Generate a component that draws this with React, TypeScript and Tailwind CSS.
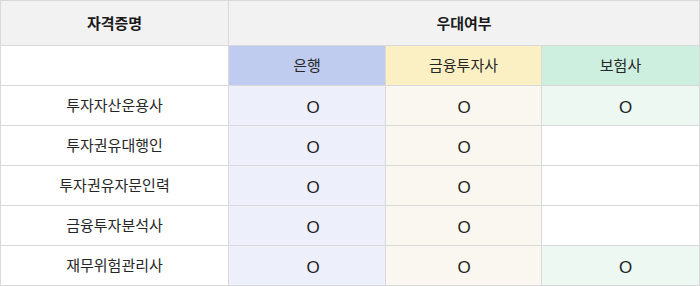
import React from "react";

const rows: { name: string; v: [boolean, boolean, boolean] }[] = [
  { name: "투자자산운용사", v: [true, true, true] },
  { name: "투자권유대행인", v: [true, true, false] },
  { name: "투자권유자문인력", v: [true, true, false] },
  { name: "금융투자분석사", v: [true, true, false] },
  { name: "재무위험관리사", v: [true, true, true] },
];

const cell = "flex items-center justify-center";

function Mark() {
  return (
    <span
      className="text-[17px] leading-none text-[#222] pt-[3px]"
      style={{ fontFamily: '"Liberation Sans", Arial, sans-serif' }}
    >
      O
    </span>
  );
}

export default function App() {
  return (
    <div
      className="w-[700px] h-[286px] bg-white text-[#262626] text-[15px]"
      style={{ fontFamily: '"Noto Sans CJK KR", "Noto Sans", sans-serif' }}
    >
      <div className="grid grid-cols-[227px_156px_155px_157px] grid-rows-[44px_39px_39px_39px_39px_39px_39px] gap-px p-px bg-[#d9d9d9]">
        <div className={`${cell} bg-[#f2f2f2] font-bold text-[#1a1a1a]`}>자격증명</div>
        <div className={`${cell} col-span-3 bg-[#f2f2f2] font-bold text-[#1a1a1a]`}>우대여부</div>
        <div className="bg-white" />
        <div className={`${cell} bg-[#bfcbef]`}>은행</div>
        <div className={`${cell} bg-[#fbf0c4]`}>금융투자사</div>
        <div className={`${cell} bg-[#cdefdf]`}>보험사</div>
        {rows.map((r) => (
          <React.Fragment key={r.name}>
            <div className={`${cell} bg-white`}>{r.name}</div>
            <div className={`${cell} pl-[12px] ${r.v[0] ? "bg-[#edf0fa]" : "bg-white"}`}>{r.v[0] ? <Mark /> : null}</div>
            <div className={`${cell} pl-[1px] ${r.v[1] ? "bg-[#f9f7ef]" : "bg-white"}`}>{r.v[1] ? <Mark /> : null}</div>
            <div className={`${cell} pl-[10px] ${r.v[2] ? "bg-[#eef8f2]" : "bg-white"}`}>{r.v[2] ? <Mark /> : null}</div>
          </React.Fragment>
        ))}
      </div>
    </div>
  );
}
